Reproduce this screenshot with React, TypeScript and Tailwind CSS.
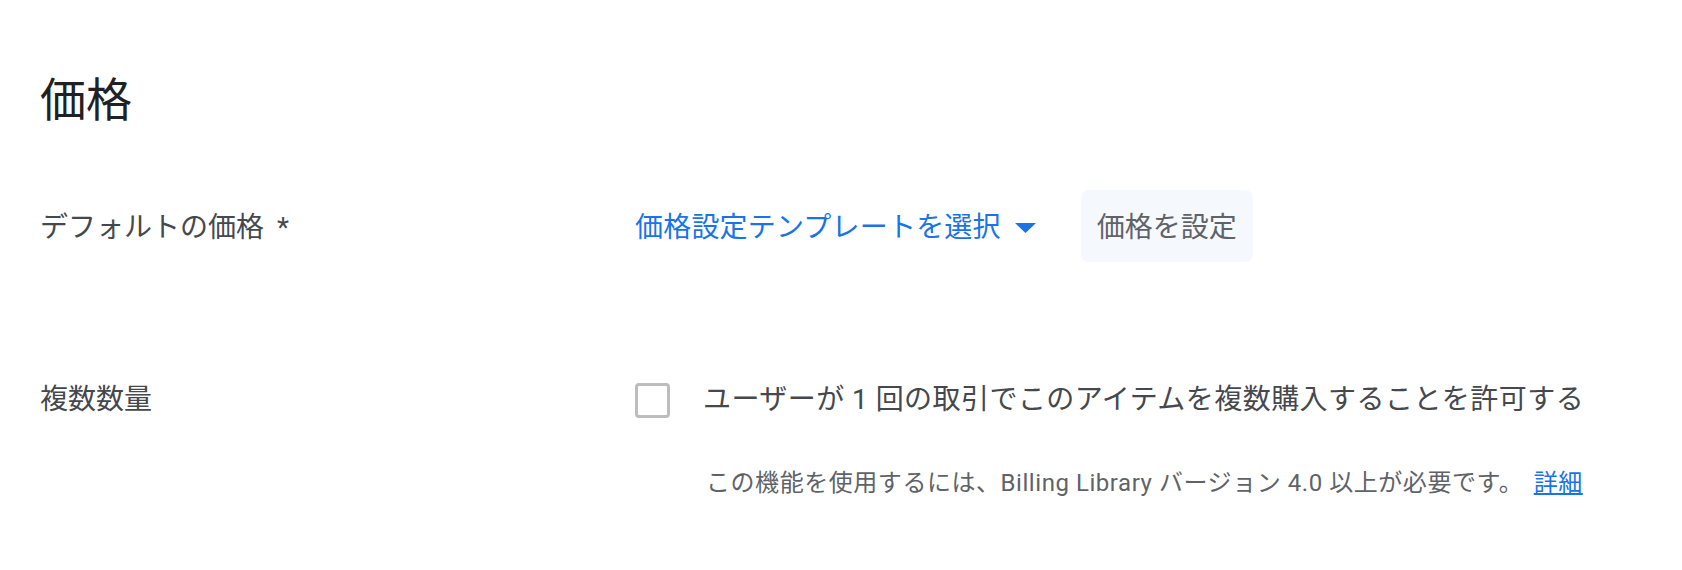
import { useState } from "react";

const font = { fontFamily: 'Roboto, "Noto Sans CJK JP", sans-serif' };

function DropArrow() {
  return (
    <svg width="21" height="10" viewBox="0 0 21 10" className="shrink-0">
      <path d="M0 0 L21 0 L10.5 10 Z" fill="#1a73e8" />
    </svg>
  );
}

export default function App() {
  const [multi, setMulti] = useState(false);

  return (
    <div className="min-h-[570px] w-full bg-white pl-10 pt-[72px]" style={font}>
      <h1 className="text-[46px] leading-[56px] font-normal text-[#202124]">価格</h1>

      <div className="mt-[62px] flex h-[72px] items-center">
        <div className="w-[595px] pt-1 text-[28px] leading-9 text-[#45484c]">
          デフォルトの価格 <span className="ml-[6px]">*</span>
        </div>
        <div className="flex items-center pt-1">
          <button className="flex items-center gap-[14px] text-[28px] leading-9 text-[#1a73e8]">
            <span className="tracking-[0.2px]">価格設定テンプレートを選択</span>
            <DropArrow />
          </button>
          <button className="ml-[45px] -mt-1 flex h-[72px] items-center rounded-lg bg-[#f5f8fd] px-4 pt-1 text-[28px] leading-9 text-[#5f6368]">
            価格を設定
          </button>
        </div>
      </div>

      <div className="mt-[120px] flex items-center">
        <div className="w-[595px] text-[28px] leading-9 text-[#45484c]">複数数量</div>
        <label className="flex cursor-pointer items-center gap-[33px]">
          <span
            onClick={() => setMulti(!multi)}
            className={
              multi
                ? "flex h-[35px] w-[35px] items-center justify-center rounded-[4px] border-[3px] border-[#1a73e8] bg-[#1a73e8]"
                : "h-[35px] w-[35px] rounded-[4px] border-[3px] border-[#bdbdbd]"
            }
          />
          <span className="text-[28px] leading-9 tracking-[0.45px] text-[#45484c]">
            ユーザーが 1 回の取引でこのアイテムを複数購入することを許可する
          </span>
        </label>
      </div>

      <div className="mt-[49px] pl-[666px] text-[24px] leading-8 tracking-[0.55px] text-[#5f6368]">
        この機能を使用するには、Billing Library バージョン 4.0 以上が必要です。{" "}
        <a href="#" className="ml-1 text-[#1a73e8] underline">
          詳細
        </a>
      </div>
    </div>
  );
}
